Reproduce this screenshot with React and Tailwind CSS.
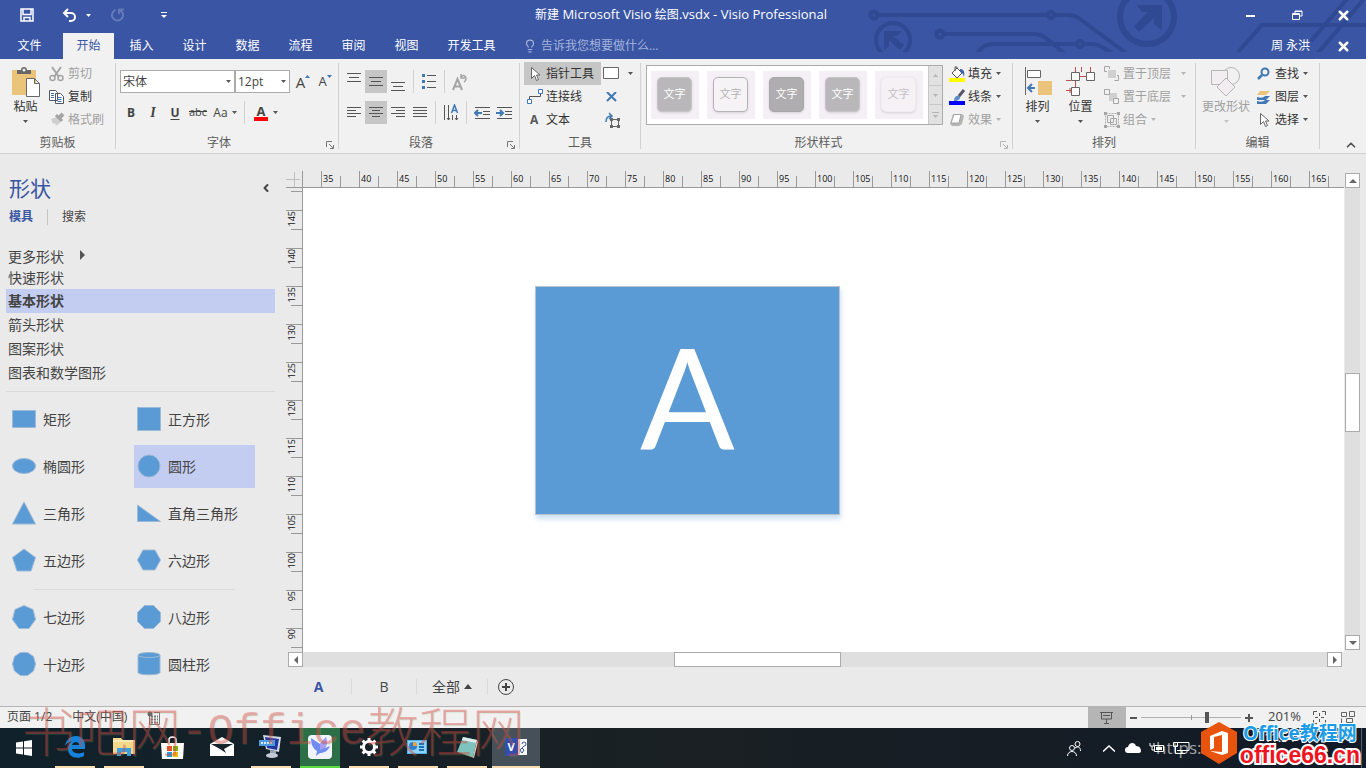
import React from 'react';
import clsx from 'clsx';
import { ChevronUp, ChevronLeft, Lightbulb, X } from 'lucide-react';

const TABS = ['文件', '开始', '插入', '设计', '数据', '流程', '审阅', '视图', '开发工具'];
const H_MARKS = Array.from({ length: 27 }, (_, i) => 35 + i * 5);
const V_MARKS = Array.from({ length: 12 }, (_, i) => 145 - i * 5);

const Svg = ({ w = 16, h = 16, className, children }) => (
  <svg width={w} height={h} viewBox={`0 0 ${w} ${h}`} fill="none" aria-hidden="true" className={clsx('shrink-0', className)}>
    {children}
  </svg>
);

const Caret = ({ className = 'text-[#555]', up }) => (
  <Svg w={5} h={3} className={className}>
    <path d={up ? 'M0 3h5L2.500 0z' : 'M0 0h5L2.500 3z'} fill="currentColor" />
  </Svg>
);

const Separator = () => <div className="mx-1 h-[23px] w-px bg-[#d2d2d2]" />;

const Launcher = ({ muted }) => (
  <button aria-label="更多选项" className={clsx('flex w-4 items-center justify-end pt-1 pr-1', muted ? 'text-[#b5b5b5]' : 'text-[#777]')}>
    <Svg w={8} h={8}>
      <path d="M.5 6V.5H6M3 3l4 4M7.500 4v3.500H4" stroke="currentColor" />
    </Svg>
  </button>
);

const Group = ({ label, className, launcher, muted, children }) => (
  <>
    <section className={clsx('flex shrink-0 flex-col', className)} aria-label={label}>
      <div className="mt-[3px] flex h-[69px]">{children}</div>
      <div className="flex h-[22px] items-center pt-[2px] text-[#5c5c5c]">
        <span className="flex-1 text-center">{label}</span>
        {launcher && <Launcher muted={muted} />}
      </div>
    </section>
    <div className="my-1 w-px shrink-0 bg-[#d2d2d2]" />
  </>
);

const BigButton = ({ label, icon, muted, caretColor, className }) => (
  <button className={clsx('flex flex-col items-center pt-[5px]', muted ? 'text-[#a0a0a0]' : 'text-[#333]', className)}>
    <span className="flex h-[30px] items-start">{icon}</span>
    <span className="h-[23px] leading-5 whitespace-nowrap">{label}</span>
    <Caret className={caretColor} />
  </button>
);

const SmallButton = ({ label, icon, muted, caret, spread }) => (
  <button className={clsx('flex h-[23px] items-center whitespace-nowrap', muted ? 'text-[#a0a0a0]' : 'text-[#333]')}>
    <span className="flex w-[19px] items-center">{icon}</span>
    {label}
    {caret && <Caret className={clsx(spread ? 'ml-[10px]' : 'ml-1', muted ? 'text-[#b5b5b5]' : 'text-[#555]')} />}
  </button>
);

const IconButton = ({ label, active, className = 'w-[22px]', children }) => (
  <button aria-label={label} className={clsx('flex h-[23px] items-center justify-center text-[#444]', active && 'bg-[#c6c6c6]', className)}>
    {children}
  </button>
);

const Lines = ({ d }) => (
  <Svg w={16} h={18}>
    <path d={d} stroke="#555" />
  </Svg>
);

/* circuit drawing behind the window controls */
const HeaderArt = () => (
  <svg width="500" height="52" viewBox="866 0 500 52" fill="none" aria-hidden="true" className="pointer-events-none absolute top-0 right-0">
    <g stroke="#2f4a92" strokeWidth="4">
      <circle cx="874" cy="15" r="3.500" />
      <path d="M878 15h170M1055 15h13c5 0 8 1 12 4l46 34" />
      <circle cx="1051" cy="15" r="3" />
      <circle cx="893" cy="40" r="17" />
      <circle cx="940" cy="34" r="3.500" />
      <path d="M944 34h90c5 0 8 1 12 4l18 15M977 53l6-6c3-2 5-3 9-3h85" />
      <circle cx="1080" cy="44" r="3" />
      <path d="M1084 44h8c4 0 6 1 10 3l10 6" />
      <circle cx="1147" cy="17" r="27" strokeWidth="6" />
      <path d="M1238 52l24-27h104M1311 41l36-42M1318 53l46-54" />
    </g>
    <path d="M884 31h18l-5 5h-4l11 9-4 5-11-10v6l-5 4z" fill="#2f4a92" />
    <path d="M1137 5h25v25l-8-6v-6l-15 14-5-6 14-14h-6z" fill="#2f4a92" />
  </svg>
);

const TitleBar = () => (
  <header className="relative bg-[#3955a3] text-white">
    <HeaderArt />
    <div className="relative grid h-[30px] grid-cols-[1fr_auto_1fr] items-center">
      <div className="flex items-center pl-5">
        <button aria-label="保存">
          <Svg w={14} h={14}>
            <path d="M1 1h12v12H1zM3 1v5.500h8V1M4 13V9.500h6V13" stroke="#fff" strokeWidth="1.500" />
          </Svg>
        </button>
        <button aria-label="撤消" className="ml-7">
          <Svg w={16} h={15}>
            <path d="M6 1L2 5l4 4M2 5h7a4 4 0 0 1 0 8H7" stroke="#fff" strokeWidth="2" />
          </Svg>
        </button>
        <Caret className="ml-2 text-white" />
        <button aria-label="恢复" className="ml-5">
          <Svg w={14} h={14}>
            <path d="M8 6V1.500h5M8.500 2a5.500 5.500 0 1 1-4 0" stroke="#6379b8" strokeWidth="2" />
          </Svg>
        </button>
        <button aria-label="自定义快速访问工具栏" className="ml-9">
          <Svg w={6} h={8}>
            <path d="M0 1.500h6" stroke="#fff" />
            <path d="M0 4h6L3 7z" fill="#fff" />
          </Svg>
        </button>
      </div>
      <h1 className="pr-1 text-[13px]">
        <span className="text-xs">新建</span> Microsoft Visio <span className="text-xs">绘图</span>.vsdx - Visio Professional
      </h1>
      <div className="flex h-full justify-end">
        <button aria-label="最小化" className="flex w-[46px] items-center justify-center">
          <Svg w={10} h={4}><path d="M0 3h9" stroke="#fff" strokeWidth="2" /></Svg>
        </button>
        <button aria-label="还原" className="flex w-[46px] items-center justify-center">
          <Svg w={11} h={10}><path d="M3 3V1h7v5H8M.5 3.500h7v6h-7zM.5 4.500h7M3 1.500h7" stroke="#fff" /></Svg>
        </button>
        <button aria-label="关闭" className="flex w-[46px] items-center justify-center">
          <X size={15} strokeWidth={4} />
        </button>
      </div>
    </div>
    <div className="relative mt-[3px] flex h-[26px] items-stretch">
      <nav className="flex gap-[2px]">
        {TABS.map((tab, i) => (
          <button
            key={tab}
            className={clsx(
              'whitespace-nowrap',
              i === 0 ? 'w-[61px] pr-[2px]' : i === 8 ? 'w-[75px]' : 'w-[51px]',
              i === 1 && 'bg-[#f1f1f1] text-[#3955a3]'
            )}
          >
            {tab}
          </button>
        ))}
      </nav>
      <label className="ml-[14px] flex flex-1 items-center gap-1 text-[#a3b3dc]">
        <Lightbulb size={14} />
        <input aria-label="告诉我" placeholder="告诉我您想要做什么..." className="w-[140px] bg-transparent outline-none placeholder:text-[#a3b3dc]" />
      </label>
      <button className="px-[10px]">周 永洪</button>
      <button aria-label="关闭文档" className="flex w-[46px] items-center justify-center">
        <X size={15} strokeWidth={4} />
      </button>
    </div>
  </header>
);

const PasteIcon = () => (
  <Svg w={29} h={30}>
    <path d="M1 3h24v25H1z" fill="#eac47b" />
    <path d="M6 7V3h4c0-4 6-4 6 0h4v4z" fill="#666" />
    <circle cx="13" cy="3" r="1.500" fill="#f1f1f1" />
    <path d="M15.500 11.500h8l5 5v13h-13zM23.500 11.500v5h5" fill="#fff" stroke="#666" />
  </Svg>
);

const ClipboardGroup = () => (
  <Group label="剪贴板" className="w-[115px]">
    <BigButton label="粘贴" icon={<PasteIcon />} className="w-[49px] pl-[2px]" />
    <div className="flex flex-col">
      <SmallButton
        label="剪切"
        muted
        icon={<Svg><path d="M3 1l7 10M12 1L5 11" stroke="#a5a5a5" strokeWidth="2" /><circle cx="3.500" cy="12" r="2.500" stroke="#a5a5a5" strokeWidth="1.500" /><circle cx="11.500" cy="12" r="2.500" stroke="#a5a5a5" strokeWidth="1.500" /></Svg>}
      />
      <SmallButton
        label="复制"
        icon={<Svg><path d="M.5 1.500h6l2 2v8h-8zM6.500 4.500h5l3 3v7h-8z" fill="#fff" stroke="#556" /><path d="M2 4.500h3M2 6.500h3M2 8.500h3M8.500 8.500h4M8.500 10.500h4M8.500 12.500h4" stroke="#3f78b5" /></Svg>}
      />
      <SmallButton
        label="格式刷"
        muted
        icon={<Svg><path d="M2 7l6-2 4 5-5 4-1-3-2 1z" fill="#cfcfcf" /><path d="M7 3l6 6" stroke="#a5a5a5" strokeWidth="3" /><path d="M10 6l4-4" stroke="#a5a5a5" strokeWidth="4" /></Svg>}
      />
    </div>
  </Group>
);

const Picker = ({ label, value, className }) => (
  <label className={clsx('relative flex', className)}>
    <select aria-label={label} defaultValue={value} className="h-[23px] w-full appearance-none border border-[#ababab] bg-white pl-[2px] text-[#444]">
      <option>{value}</option>
    </select>
    <Caret className="pointer-events-none absolute top-[10px] right-1 text-[#555]" />
  </label>
);

const FontGroup = () => (
  <Group label="字体" className="w-[222px]" launcher>
    <div className="flex flex-col gap-2 pt-2 pl-1">
      <div className="flex">
        <Picker label="字体" value="宋体" className="w-[115px]" />
        <Picker label="字号" value="12pt" className="w-[55px]" />
        <IconButton label="增大字号" className="ml-[2px] w-[22px] text-[15px]">
          A<Caret up className="mt-[5px] self-start text-[#3f78b5]" />
        </IconButton>
        <IconButton label="减小字号" className="w-[22px] text-[13px]">
          A<Caret className="mt-[5px] self-start text-[#3f78b5]" />
        </IconButton>
      </div>
      <div className="flex items-center">
        <IconButton label="加粗"><b>B</b></IconButton>
        <IconButton label="倾斜"><i className="font-['Liberation_Serif'] text-sm font-bold">I</i></IconButton>
        <IconButton label="下划线"><b className="underline underline-offset-2">U</b></IconButton>
        <IconButton label="删除线" className="w-6"><span className="text-[11px] line-through">abc</span></IconButton>
        <IconButton label="更改大小写" className="w-[30px] gap-1">Aa<Caret /></IconButton>
        <Separator />
        <IconButton label="字体颜色" className="w-6">
          <span className="border-b-4 border-[#f00] px-[3px] text-[13px] leading-3 font-bold">A</span>
        </IconButton>
        <Caret />
      </div>
    </div>
  </Group>
);

const ParagraphGroup = () => (
  <Group label="段落" className="w-[180px]" launcher>
    <div className="flex flex-col gap-2 pt-2 pl-1">
      <div className="flex">
        <IconButton label="顶端对齐"><Lines d="M1 .5h14M3 4.500h10M1 8.500h14" /></IconButton>
        <IconButton label="中部对齐" active><Lines d="M1 4.500h14M3 8.500h10M1 12.500h14" /></IconButton>
        <IconButton label="底端对齐"><Lines d="M1 9.500h14M3 13.500h10M1 17.500h14" /></IconButton>
        <Separator />
        <IconButton label="项目符号">
          <Svg w={14} h={18}>
            <path d="M5 2.500h9M5 8.500h9M5 14.500h9" stroke="#555" />
            <path d="M0 1h3v3H0zM0 7h3v3H0zM0 13h3v3H0z" fill="#3f78b5" />
          </Svg>
        </IconButton>
        <Separator />
        <IconButton label="旋转文本">
          <Svg w={16} h={18}>
            <path d="M1 17L5.500 6 10 17M2.500 13.500h6" stroke="#a5a5a5" strokeWidth="2" />
            <path d="M9 1v4h4M9 4c2-2.500 5-1.500 5 1.500 0 2-1 3-2 3.500" stroke="#a5a5a5" strokeWidth="1.500" />
          </Svg>
        </IconButton>
      </div>
      <div className="flex">
        <IconButton label="左对齐"><Lines d="M1 3.500h14M1 6.500h9M1 9.500h14M1 12.500h9" /></IconButton>
        <IconButton label="居中" active><Lines d="M1 3.500h14M4 6.500h8M1 9.500h14M4 12.500h8" /></IconButton>
        <IconButton label="右对齐"><Lines d="M1 3.500h14M6 6.500h9M1 9.500h14M6 12.500h9" /></IconButton>
        <IconButton label="两端对齐"><Lines d="M1 3.500h14M1 6.500h14M1 9.500h14M1 12.500h14" /></IconButton>
        <Separator />
        <IconButton label="文字方向">
          <Svg w={16} h={18}>
            <path d="M1.500 1v15M5.500 1v15M9.500 11v5M13.500 11v5M4 14l1.500 2L7 14M12 14l1.500 2 1.500-2" stroke="#555" />
            <path d="M8.500 9l3-8 3 8M9.500 6.500h4" stroke="#3f78b5" strokeWidth="1.500" />
          </Svg>
        </IconButton>
        <Separator />
        <IconButton label="减少缩进">
          <Svg w={16} h={14}>
            <path d="M1 1.500h15M9 5.500h7M9 8.500h7M1 12.500h15" stroke="#555" />
            <path d="M8 7H2M4 4L1 7l3 3" stroke="#3f78b5" strokeWidth="2" />
          </Svg>
        </IconButton>
        <IconButton label="增加缩进">
          <Svg w={16} h={14}>
            <path d="M1 1.500h15M9 5.500h7M9 8.500h7M1 12.500h15" stroke="#555" />
            <path d="M0 7h6M4 4l3 3-3 3" stroke="#3f78b5" strokeWidth="2" />
          </Svg>
        </IconButton>
      </div>
    </div>
  </Group>
);

const Pointer = () => (
  <Svg w={10} h={16}>
    <path d="M1.500 1.500v11l3-3 2 5 2-1-2-4.500h3.500z" fill="#fff" stroke="#666" />
  </Svg>
);

const ToolsGroup = () => (
  <Group label="工具" className="w-[120px]">
    <div className="ml-1 flex w-[77px] flex-col">
      <button className="flex h-[23px] items-center bg-[#c6c6c6] pl-[6px] text-[#333]">
        <span className="w-4"><Pointer /></span>指针工具
      </button>
      <button className="flex h-[23px] items-center pl-[3px] text-[#333]">
        <span className="w-[19px]">
          <Svg><path d="M.5 10.500h4v4h-4zM11.500.5h4v4h-4z" fill="#fff" stroke="#3f78b5" /><path d="M2.500 10V7.500h11V5" stroke="#555" /></Svg>
        </span>
        连接线
      </button>
      <button className="flex h-[23px] items-center pl-[6px] text-[#333]">
        <b className="w-4 text-left text-[#555]">A</b>文本
      </button>
    </div>
    <div className="flex flex-col pl-[3px]">
      <IconButton label="矩形" className="w-7 gap-2">
        <Svg w={17} h={13}><path d="M.5.5h15v11H.5z" fill="#fff" stroke="#666" /></Svg>
        <Caret />
      </IconButton>
      <IconButton label="连接点" className="w-4">
        <Svg w={12} h={10}><path d="M1 0l9 9M10 0L1 9" stroke="#3f78b5" strokeWidth="2" /></Svg>
      </IconButton>
      <IconButton label="文本块" className="w-4">
        <Svg w={16} h={16}>
          <path d="M7.500 7.500h7v7h-7z" stroke="#666" />
          <path d="M6 6h3v3H6zM13 6h3v3h-3zM6 13h3v3H6zM13 13h3v3h-3z" fill="#666" />
          <path d="M2 10c0-4 1-6 5-6M5 1l3 3-3 3" stroke="#3f78b5" strokeWidth="1.500" />
        </Svg>
      </IconButton>
    </div>
  </Group>
);

const STYLES = [
  'bg-[#b9b7ba] border-[#c6c4c7] text-white',
  'bg-[#f6f3f6] border-[#b5b3b6] text-[#b5b3b6]',
  'bg-[#afadb0] border-[#a8a6a9] text-white',
  'bg-[#b9b7ba] border-[#c6c4c7] text-white',
  'bg-[#f5f1f5] border-[#f0ebf0] text-[#c4c0c4]',
];

const StylesGroup = () => (
  <Group label="形状样式" className="w-[371px]" launcher muted>
    <div className="mt-[3px] ml-[5px] flex h-[60px] border border-[#ababab] bg-white">
      <div className="flex items-center gap-2 pr-[5px] pl-1">
        {STYLES.map((style, i) => (
          <button key={i} className="flex size-12 items-center justify-center bg-[#f5f0f5] pr-px pb-px">
            <span className={clsx('flex size-[35px] items-center justify-center rounded-[5px] border text-[11px] shadow-sm', style)}>文字</span>
          </button>
        ))}
      </div>
      <div className="flex w-[14px] flex-col divide-y divide-[#c8c8c8] border-l border-[#c8c8c8] bg-[#e1e1e1]">
        <button aria-label="上一行" className="flex flex-1 items-center justify-center"><Caret up className="text-[#b5b5b5]" /></button>
        <button aria-label="下一行" className="flex flex-1 items-center justify-center"><Caret className="text-[#b5b5b5]" /></button>
        <button aria-label="其他" className="flex flex-1 flex-col items-center justify-center gap-[2px]">
          <span className="h-px w-[7px] bg-[#b5b5b5]" />
          <Caret className="text-[#b5b5b5]" />
        </button>
      </div>
    </div>
    <div className="ml-[6px] flex flex-col">
      <SmallButton
        label="填充"
        caret
        icon={<Svg w={17} h={16}><path d="M0 12h16v4H0z" fill="#ff0" /><path d="M3 7l5-5 5 5-5 5zM6 5V1h2v2" fill="#fff" stroke="#555" /><path d="M11 3c4 0 5 3 4 8-1-3-1-4-4-5z" fill="#3f5fb0" /></Svg>}
      />
      <SmallButton
        label="线条"
        caret
        icon={<Svg w={17} h={16}><path d="M0 12h16v4H0z" fill="#00f" /><path d="M5 12c0-5 3-6 6-5 1 3-2 5-6 5z" fill="#5b8fc8" /><path d="M10 7l5-6" stroke="#556" strokeWidth="3" /></Svg>}
      />
      <SmallButton
        label="效果"
        caret
        muted
        icon={<Svg><path d="M4 2h9l2 2-2 8-3 2H3l-2-2z" fill="#b5b5b5" /><path d="M5 2.500h7L10 11H2z" fill="#fff" stroke="#a5a5a5" /></Svg>}
      />
    </div>
  </Group>
);

const ArrangeGroup = () => (
  <Group label="排列" className="w-[182px]">
    <BigButton
      label="排列"
      className="ml-[3px] w-[43px]"
      icon={
        <Svg w={28} h={29}>
          <path d="M1.500 0v28" stroke="#666" />
          <path d="M3.500 3.500h13v7h-13z" fill="#fff" stroke="#666" />
          <path d="M14 14h14v14H14z" fill="#eac47b" />
          <path d="M11 21H5M8 17l-4 4 4 4" stroke="#3f78b5" strokeWidth="2" />
        </Svg>
      }
    />
    <BigButton
      label="位置"
      className="w-[43px]"
      icon={
        <Svg w={30} h={29}>
          <path d="M9.500 0v5M15.500 0v5M24.500 0v5M14 9.500h7M9.500 14v6M0 13.500h5M0 23.500h5M4 21v5" stroke="#c0504d" />
          <path d="M5.500 5.500h8v8h-8zM20.500 5.500h8v8h-8zM5.500 20.500h8v8h-8z" fill="#fff" stroke="#666" />
        </Svg>
      }
    />
    <div className="ml-[2px] flex flex-col">
      <SmallButton
        label="置于顶层"
        muted
        caret
        spread
        icon={<Svg><path d="M4 4h8v8H4z" fill="#d0d0d0" /><path d="M3 5.500H.5v-5h5V3M10.500 14.500h4v-5H13" stroke="#a5a5a5" /></Svg>}
      />
      <SmallButton
        label="置于底层"
        muted
        caret
        spread
        icon={<Svg><path d="M5 4h8v8H5z" fill="#d0d0d0" /><path d="M.5.500h5v5h-5zM9.500 9.500h5v5h-5z" fill="#f1f1f1" stroke="#a5a5a5" /></Svg>}
      />
      <SmallButton
        label="组合"
        muted
        caret
        icon={<Svg><path d="M1.500 1.500h13v13h-13z" stroke="#b0b0b0" strokeDasharray="2 1" /><path d="M3.500 3.500h6v7h-6zM6.500 6.500h6v6h-6z" stroke="#a5a5a5" /><path d="M0 0h3v3H0zM13 0h3v3h-3zM0 13h3v3H0zM13 13h3v3h-3z" fill="#a5a5a5" /></Svg>}
      />
    </div>
  </Group>
);

const EditGroup = () => (
  <Group label="编辑" className="w-[123px]">
    <BigButton
      label="更改形状"
      muted
      caretColor="text-[#c4c4c4]"
      className="w-[60px]"
      icon={
        <Svg w={30} h={30}>
          <circle cx="20" cy="9" r="8.500" fill="#f1f1f1" stroke="#b5b5b5" />
          <path d="M.5 3.500h16v14H.5z" fill="#f1edf0" stroke="#b5b5b5" />
          <path d="M15 11l9 9-9 9-9-9z" fill="#f1edf0" stroke="#b5b5b5" />
        </Svg>
      }
    />
    <div className="flex flex-col">
      <SmallButton
        label="查找"
        caret
        icon={<Svg><circle cx="9" cy="6" r="3.500" stroke="#3f78b5" strokeWidth="2" /><path d="M6 9l-4 4" stroke="#3f78b5" strokeWidth="2.500" /></Svg>}
      />
      <SmallButton
        label="图层"
        caret
        icon={<Svg><path d="M4 2h10l-4 4H1z" fill="#eac47b" /><path d="M1 8c4 1 6 1 8-1h5l-4 4H1zM1 12c4 1 6 1 8-1h5l-4 4H1z" fill="#3f78b5" /></Svg>}
      />
      <SmallButton label="选择" caret icon={<span className="pl-[3px]"><Pointer /></span>} />
    </div>
  </Group>
);

const Ribbon = () => (
  <div className="flex h-[95px] border-b border-[#d0d0d0] bg-[#f1f1f1]">
    <ClipboardGroup />
    <FontGroup />
    <ParagraphGroup />
    <ToolsGroup />
    <StylesGroup />
    <ArrangeGroup />
    <EditGroup />
    <button aria-label="折叠功能区" className="flex flex-1 items-end justify-end pr-2 pb-px text-[#555]">
      <ChevronUp size={14} strokeWidth={3} />
    </button>
  </div>
);

const STENCILS = ['更多形状', '快速形状', '基本形状', '箭头形状', '图案形状', '图表和数学图形'];

const SHAPES = [
  ['矩形', <path d="M.5 3.500h23v17H.5z" />],
  ['正方形', <path d="M.5.500h23v23H.5z" />],
  ['椭圆形', <ellipse cx="12" cy="12" rx="11.500" ry="7.500" />],
  ['圆形', <circle cx="12" cy="12" r="11" />],
  ['三角形', <path d="M12 1l11.500 22H.5z" />],
  ['直角三角形', <path d="M.5 4v16.500h23z" />],
  ['五边形', <path d="M12 1l11.500 8.500L19 23H5L.5 9.500z" />],
  ['六边形', <path d="M6 2h12l5.500 10L18 22H6L.5 12z" />],
  ['七边形', <path d="M12 .5l9 4 2.500 10-6.500 9H7l-6.500-9L3 4.500z" />],
  ['八边形', <path d="M7.500.5h9l7 7v9l-7 7h-9l-7-7v-9z" />],
  ['十边形', <path d="M8.500.5h7l6 4 2 7.500-2 7-6 4.500h-7l-6-4.500-2-7 2-7.500z" />],
  ['圆柱形', <><path d="M1 3v17.500c0 3 22 3 22 0V3z" /><ellipse cx="12" cy="3" rx="11" ry="2.500" /></>],
];

const ShapeGrid = ({ items }) => (
  <div className="ml-[9px] grid grid-cols-[121px_121px] gap-1">
    {items.map(([name, shape]) => (
      <button key={name} className={clsx('flex h-[43px] items-center gap-[7px] pl-[3px]', name === '圆形' && 'bg-[#c3cdf2]')}>
        <Svg w={24} h={24} className="mb-[2px]">
          <g fill="#5b9bd5" stroke="#9cb9d6">{shape}</g>
        </Svg>
        {name}
      </button>
    ))}
  </div>
);

const ShapesPanel = () => (
  <aside className="w-[286px] shrink-0 pt-[22px] text-sm text-[#444]">
    <div className="flex h-6 items-center justify-between pr-[14px] pl-[9px]">
      <h2 className="text-[21px] leading-6 text-[#3955a3]">形状</h2>
      <button aria-label="最小化形状窗口"><ChevronLeft size={12} strokeWidth={4} /></button>
    </div>
    <div className="mt-[7px] flex h-5 items-center pl-[9px] text-xs">
      <button className="font-bold text-[#3955a3]">模具</button>
      <div className="mx-[14px] h-4 w-px bg-[#c6c6c6]" />
      <button>搜索</button>
    </div>
    <ul className="mt-5 ml-[6px] w-[269px]">
      {STENCILS.map((name, i) => (
        <li key={name} className={clsx(i === 0 ? 'h-5' : i === 1 ? 'h-[22px]' : 'h-6', i === 2 && 'bg-[#c3cdf2] font-bold')}>
          <button className="flex h-full w-full items-center gap-4 pl-[2px]">
            {name}
            {i === 0 && <Svg w={5} h={10} className="mb-1"><path d="M0 0v10l5-5z" fill="#555" /></Svg>}
          </button>
        </li>
      ))}
    </ul>
    <div className="mt-[6px] mb-[6px] ml-[6px] h-px w-[269px] bg-[#dadada]" />
    <ShapeGrid items={SHAPES.slice(0, 8)} />
    <div className="mt-[7px] mb-[6px] ml-[33px] h-px w-[202px] bg-[#dadada]" />
    <ShapeGrid items={SHAPES.slice(8)} />
  </aside>
);

const ScrollButton = ({ label, d }) => (
  <button aria-label={label} className="flex size-[15px] shrink-0 items-center justify-center border border-[#ababab] bg-white">
    <Svg w={8} h={8}><path d={d} fill="#666" /></Svg>
  </button>
);

const HRuler = () => (
  <div className="flex h-[17px] min-w-0 flex-1 overflow-hidden border-b border-[#999] pl-[18px] text-[9px] text-[#111]">
    {H_MARKS.map((mark) => (
      <div key={mark} className="flex w-[38px] shrink-0 items-end">
        <div className="flex h-4 w-[19px] border-l border-[#999] pl-px leading-4">{mark}</div>
        <div className="h-[11px] border-l border-[#999]" />
      </div>
    ))}
  </div>
);

const VRuler = () => (
  <div className="flex w-[17px] flex-col items-end overflow-hidden border-r border-[#999] pt-[3px] text-[9px] text-[#111]">
    <div className="h-[19px] w-[11px] shrink-0 border-t border-[#999]" />
    {V_MARKS.map((mark) => (
      <div key={mark} className="flex h-[38px] w-4 shrink-0 flex-col items-end">
        <div className="h-[19px] w-4 border-t border-[#999]">
          <span className="block rotate-180 leading-[11px] [writing-mode:vertical-rl]">{mark}</span>
        </div>
        <div className="w-[11px] border-t border-[#999]" />
      </div>
    ))}
  </div>
);

const DrawingArea = () => (
  <main className="flex min-w-0 flex-1">
    <div className="flex min-w-0 flex-1 flex-col pt-[17px]">
      <div className="flex">
        <Svg w={17} h={17}>
          <path d="M0 8.500h14M8.500 1v15" stroke="#c0c0c0" />
          <path d="M16.500 0v17M0 16.500h17" stroke="#999" />
        </Svg>
        <HRuler />
      </div>
      <div className="flex min-h-0 flex-1">
        <VRuler />
        <div className="relative flex-1 overflow-hidden bg-white">
          <div className="absolute top-[98px] left-[232px] flex h-[229px] w-[305px] items-center justify-center border border-[#b9c3cd] bg-[#5b9bd5] pb-3 font-['Lato'] text-[140px] leading-none text-white shadow-[1px_4px_5px_rgba(91,155,213,0.3)]">
            A
          </div>
        </div>
      </div>
      <div className="flex pr-[2px] pl-[2px]">
        <ScrollButton label="向左滚动" d="M6 0v8L2 4z" />
        <div className="flex-[371] bg-[#dfdfdf]" />
        <div className="w-[167px] border border-[#ababab] bg-white" />
        <div className="flex-[486] bg-[#dfdfdf]" />
        <ScrollButton label="向右滚动" d="M2 0v8l4-4z" />
      </div>
      <div className="flex h-[39px] items-center text-sm text-[#444]">
        <button className="w-[65px] font-bold text-[#3955a3]">A</button>
        <div className="h-4 w-px bg-[#dadada]" />
        <button className="w-16">B</button>
        <div className="h-4 w-px bg-[#dadada]" />
        <button className="flex w-[70px] items-center justify-center gap-1">
          全部
          <Svg w={8} h={5}><path d="M0 5h8L4 0z" fill="#444" /></Svg>
        </button>
        <div className="h-4 w-px bg-[#dadada]" />
        <button aria-label="插入页" className="ml-[10px]">
          <Svg w={16} h={16}>
            <circle cx="8" cy="8" r="7.500" stroke="#444" />
            <path d="M8 4v8M4 8h8" stroke="#444" strokeWidth="2" />
          </Svg>
        </button>
      </div>
    </div>
    <div className="flex w-[22px] flex-col pt-[19px] pb-14 pl-px">
      <ScrollButton label="向上滚动" d="M0 6h8L4 2z" />
      <div className="w-[15px] flex-[185] bg-[#dfdfdf]" />
      <div className="h-[59px] w-[15px] border border-[#ababab] bg-white" />
      <div className="w-[15px] flex-[202] bg-[#dfdfdf]" />
      <ScrollButton label="向下滚动" d="M0 2h8L4 6z" />
    </div>
  </main>
);

const StatusBar = () => (
  <footer className="flex h-[22px] items-center border-t border-[#b5b5b5] bg-[#f1f1f1] text-[#444]">
    <span className="pb-[2px] pl-[7px]">页面 1/2</span>
    <span className="ml-5 pb-[2px]">中文(中国)</span>
    <Svg w={14} h={14} className="ml-5">
      <path d="M2.500 5v8.500h10v-12H7" stroke="#777" />
      <circle cx="3" cy="3" r="2.500" fill="#666" />
      <path d="M4 5.500h7M4 8.500h7M4 11.500h7" stroke="#777" strokeDasharray="2 1" strokeWidth="2" />
    </Svg>
    <div className="flex-1" />
    <button aria-label="演示模式" className="flex h-full w-[38px] items-center justify-center bg-[#b5b5b5]">
      <Svg w={14} h={14}>
        <path d="M0 1.500h13M1.500 2v6h10V2M3 4.500h7M6.500 8v4M4 12.500h5" stroke="#555" />
      </Svg>
    </button>
    <button aria-label="缩小" className="flex w-[15px] justify-center">
      <Svg w={7} h={2}><path d="M0 1h7" stroke="#555" strokeWidth="2" /></Svg>
    </button>
    <div className="relative flex w-[100px] items-center">
      <div className="absolute inset-x-0 h-px bg-[#b0b0b0]" />
      <div className="absolute left-[50px] h-[5px] w-px bg-[#999]" />
      <input
        type="range"
        aria-label="缩放"
        defaultValue={67}
        className="relative h-3 w-full appearance-none bg-transparent [&::-webkit-slider-thumb]:h-[11px] [&::-webkit-slider-thumb]:w-1 [&::-webkit-slider-thumb]:appearance-none [&::-webkit-slider-thumb]:bg-[#555]"
      />
    </div>
    <button aria-label="放大" className="flex w-[15px] justify-center">
      <Svg w={8} h={8}><path d="M0 4h8M4 0v8" stroke="#555" strokeWidth="2" /></Svg>
    </button>
    <span className="w-[57px] pb-[2px] text-center text-[13px]">201%</span>
    <button aria-label="调整页面以适合窗口" className="w-7">
      <Svg w={13} h={13}><path d="M.5 4V.500H4M9 .5h3.500V4M12.500 9v3.500H9M4 12.500H.5V9M6.500 2v3M6.500 8v3M2 6.500h3M8 6.500h3" stroke="#555" /></Svg>
    </button>
    <button aria-label="切换窗口" className="w-[25px]">
      <Svg w={14} h={13}><path d="M.5 1.500h5v4h-5zM8.500.500h5v5h-5zM.5 7.500v5h4M5.500 7.500h6v4h-6z" stroke="#666" /></Svg>
    </button>
  </footer>
);

const TaskItem = ({ label, running, cell, children }) => (
  <button aria-label={label} className="flex h-full w-[49px] justify-center">
    <span className={clsx('flex h-full items-center justify-center border-b-2', cell || 'w-10', !cell && (running ? 'border-[#f9dcb0]' : 'border-transparent'))}>
      {children}
    </span>
  </button>
);

const Taskbar = () => (
  <div className="flex h-10 items-center bg-linear-to-r from-[#10212b] via-[#1a2023] to-[#111a27] text-white">
    <button aria-label="开始" className="flex w-[50px] justify-center pr-[2px]">
      <Svg w={16} h={16}><path d="M0 2.500l7-1v6H0zM8 1.300L16 0v7.500H8zM0 8.500h7v6l-7-1zM8 8.500h8V16l-8-1.300z" fill="#fff" /></Svg>
    </button>
    <TaskItem label="Edge" running>
      <Svg w={20} h={22}>
        <path d="M0 10C1 4 5 0 11 0c6 0 9 5 9 9v4H7c0 4 7 6 12 3v4c-7 4-16 1-16-7 0-4 2-6 4-8C3 6 1 8 0 10zm7-1h7c0-4-6-4-7 0z" fill="#1583dc" />
      </Svg>
    </TaskItem>
    <TaskItem label="文件资源管理器" running>
      <Svg w={22} h={20}>
        <path d="M0 1h8l2 2h12v14H0z" fill="#f5d98b" />
        <path d="M0 3h22v2H0z" fill="#fbe9b5" />
        <path d="M4 19v-8h14v8h-4v-4H8v4z" fill="#3fa0e0" />
      </Svg>
    </TaskItem>
    <TaskItem label="应用商店">
      <Svg w={24} h={23}>
        <path d="M8 8V4c0-4 7-4 7 0v4" stroke="#fff" strokeWidth="1.500" />
        <path d="M0 7h23l-1 16H1z" fill="#fff" />
        <path d="M6 10h5v5H6z" fill="#e8502a" /><path d="M12 10h5v5h-5z" fill="#7fba00" />
        <path d="M6 16h5v5H6z" fill="#1a9fe8" /><path d="M12 16h5v5h-5z" fill="#fbb900" />
      </Svg>
    </TaskItem>
    <TaskItem label="邮件">
      <Svg w={24} h={20}>
        <path d="M0 7l12-7 12 7v12H0z" fill="#fff" />
        <path d="M1 7h22l-9 5 2 4-6-4z" fill="#16222a" />
      </Svg>
    </TaskItem>
    <TaskItem label="远程桌面" running>
      <Svg w={23} h={24}>
        <path d="M4 0l18 2-2 15-13-3z" fill="#d5dbe5" />
        <path d="M6 2l14 2-2 11-10-2z" fill="#2338a0" />
        <path d="M0 5h16v6H0z" fill="#4a9be0" /><path d="M2 8h12" stroke="#d9ecff" strokeWidth="2" strokeDasharray="2 1" />
        <path d="M11 15l6 1v5h-6z" fill="#9aa5b8" /><ellipse cx="13" cy="20.500" rx="6" ry="2.500" fill="#c5ccd8" />
      </Svg>
    </TaskItem>
    <TaskItem label="迅雷" cell="w-10 bg-[#2c6e46] border-[#5bdc43]">
      <Svg w={24} h={24}>
        <rect width="24" height="24" rx="4" fill="#f1f3fb" />
        <path d="M3 3l9 6 6-7c1 5 1 8-1 11l5-2c-2 5-6 7-10 7l-4 3 1-5c-4-2-6-7-6-13z" fill="#6f8cf0" />
        <path d="M12 9l6-7c1 5 1 8-1 11l-5 2z" fill="#a99cf5" />
      </Svg>
    </TaskItem>
    <TaskItem label="设置" running>
      <Svg w={20} h={20}>
        <circle cx="10" cy="10" r="5.500" stroke="#fff" strokeWidth="3" />
        <path d="M10 1v3M10 16v3M1 10h3M16 10h3M3.600 3.600l2.200 2.200M14.200 14.200l2.200 2.200M3.600 16.400l2.200-2.200M14.200 5.800l2.200-2.200" stroke="#fff" strokeWidth="3" />
      </Svg>
    </TaskItem>
    <TaskItem label="控制面板" running>
      <Svg w={21} h={16}>
        <path d="M0 1h20v14H0z" fill="#4fb3ef" /><path d="M1 2h18v12H1z" fill="#8ed4fa" />
        <circle cx="6" cy="7" r="4" fill="#2f7fd0" /><path d="M6 7V3a4 4 0 0 1 4 4z" fill="#f5a030" />
        <path d="M12 5h5M12 8h5M12 11h5" stroke="#1b6fb5" strokeWidth="2" />
      </Svg>
    </TaskItem>
    <TaskItem label="记事本" running>
      <Svg w={22} h={22}>
        <path d="M7 1l14 3-4 17-16-5z" fill="#7fc3bf" /><path d="M7 1l14 3-1 3-14-3z" fill="#dbeceb" />
        <path d="M1 16l16 5 4-17 1 2-4 16z" fill="#d8cdb0" />
      </Svg>
    </TaskItem>
    <TaskItem label="Visio" cell="w-12 bg-[#465058] border-[#f9dcb0]">
      <span className="flex h-[18px] w-[13px] items-center justify-center bg-[#2f4fae] text-[11px] font-bold">V</span>
      <Svg w={9} h={16}>
        <path d="M0 0h9v16H0z" fill="#fff" /><path d="M4 5a2 2 0 1 1 2 2l-2 2 2 2-2 3-2-3 2-2" stroke="#2f4fae" />
      </Svg>
    </TaskItem>
    <div className="flex-1" />
    <button aria-label="人脉" className="mr-[22px]">
      <Svg w={14} h={15}>
        <circle cx="5" cy="7" r="2.500" stroke="#fff" /><circle cx="10.500" cy="3" r="2.500" stroke="#fff" />
        <path d="M.5 15c0-6 9-6 9 0M8 7c3-2 5.500-1 5.500 3" stroke="#fff" />
      </Svg>
    </button>
    <button aria-label="显示隐藏的图标" className="mr-[10px]">
      <Svg w={12} h={7}><path d="M0 6.500L6 1l6 5.500" stroke="#fff" strokeWidth="1.500" /></Svg>
    </button>
    <Svg w={16} h={10} className="mr-2"><path d="M3 10a3 3 0 0 1 0-6c1-5 7-5 8-1 4 0 5 3 5 5 0 1-1 2-2 2z" fill="#fff" /></Svg>
    <Svg w={16} h={12} className="mr-2"><path d="M1 1v3h4V1M3 4v4h2M5.500 3.500h9v6h-9z" stroke="#fff" /><path d="M7 5h6v3H7z" fill="#fff" /></Svg>
    <Svg w={17} h={13} className="mr-2"><path d="M4 .5h12v8H4M.5.500h4v4h-4zM2.500 5v6.500H12M9 9v3" stroke="#fff" /></Svg>
    <div className="w-[163px] pb-5 text-center leading-5">11:54</div>
    <div className="h-full w-[5px] border-l border-[#55606b]" />
  </div>
);

/* site marks lying over the lower part of the window */
const Watermarks = () => (
  <div className="pointer-events-none">
    <div className="absolute bottom-2 left-[22px] flex items-center text-[53px] leading-[56px] font-light whitespace-nowrap text-[#e03c3c]/40 [text-shadow:1px_1px_0_rgba(80,190,110,0.15)]">
      <span>书吧网</span>
      <span className="font-['Liberation_Mono'] text-[44px]">-Office</span>
      <span>教程网</span>
    </div>
    <div className="absolute right-[152px] bottom-2 text-[17px] leading-6 text-white/60">https://</div>
    <div className="absolute right-[6px] bottom-0 flex items-center gap-[3px]">
      <Svg w={36} h={42} className="mb-1">
        <path d="M18 0l18 10v21L18 42 0 31V10z" fill="#e8530e" />
        <path d="M9 14l12-5 6 2v20l-6 2-12-4 12 1V13l-8 2v11l-4 2z" fill="#fff" />
      </Svg>
      <div className="flex flex-col items-center font-bold whitespace-nowrap">
        <span className="text-[19px] leading-5 text-[#1b9be6] [-webkit-text-stroke:2px_#fff] [paint-order:stroke_fill]">Office教程网</span>
        <span className="font-['Liberation_Sans'] text-[23px] leading-6 text-[#f0141e] [-webkit-text-stroke:4px_#fff] [paint-order:stroke_fill]">office66.cn</span>
      </div>
    </div>
  </div>
);

const App = () => (
  <div className="relative flex h-screen flex-col overflow-hidden bg-[#eaeaea] font-['Open_Sans','Noto_Sans_CJK_SC',sans-serif] text-xs">
    <TitleBar />
    <Ribbon />
    <div className="flex min-h-0 flex-1">
      <ShapesPanel />
      <DrawingArea />
    </div>
    <StatusBar />
    <Taskbar />
    <Watermarks />
  </div>
);

export default App;
